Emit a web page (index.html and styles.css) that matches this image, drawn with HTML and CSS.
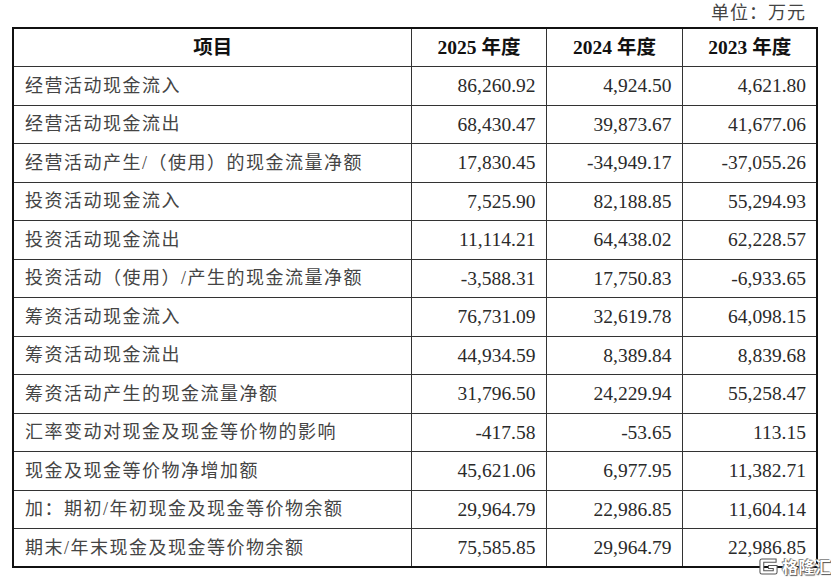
FILE: index.html
```html
<!DOCTYPE html>
<html lang="zh-CN">
<head>
<meta charset="utf-8">
<title>现金流量</title>
<link rel="stylesheet" href="styles.css">
</head>
<body>
<div class="page">
  <div class="unit">单位：万元</div>
  <table class="cf">
    <colgroup>
      <col class="c1"><col class="c2"><col class="c3"><col class="c4">
    </colgroup>
    <thead>
      <tr><th>项目</th><th>2025 年度</th><th>2024 年度</th><th>2023 年度</th></tr>
    </thead>
    <tbody>
      <tr><td class="lbl">经营活动现金流入</td><td>86,260.92</td><td>4,924.50</td><td>4,621.80</td></tr>
      <tr><td class="lbl">经营活动现金流出</td><td>68,430.47</td><td>39,873.67</td><td>41,677.06</td></tr>
      <tr><td class="lbl">经营活动产生/（使用）的现金流量净额</td><td>17,830.45</td><td>-34,949.17</td><td>-37,055.26</td></tr>
      <tr><td class="lbl">投资活动现金流入</td><td>7,525.90</td><td>82,188.85</td><td>55,294.93</td></tr>
      <tr><td class="lbl">投资活动现金流出</td><td>11,114.21</td><td>64,438.02</td><td>62,228.57</td></tr>
      <tr><td class="lbl">投资活动（使用）/产生的现金流量净额</td><td>-3,588.31</td><td>17,750.83</td><td>-6,933.65</td></tr>
      <tr><td class="lbl">筹资活动现金流入</td><td>76,731.09</td><td>32,619.78</td><td>64,098.15</td></tr>
      <tr><td class="lbl">筹资活动现金流出</td><td>44,934.59</td><td>8,389.84</td><td>8,839.68</td></tr>
      <tr><td class="lbl">筹资活动产生的现金流量净额</td><td>31,796.50</td><td>24,229.94</td><td>55,258.47</td></tr>
      <tr><td class="lbl">汇率变动对现金及现金等价物的影响</td><td>-417.58</td><td>-53.65</td><td>113.15</td></tr>
      <tr><td class="lbl">现金及现金等价物净增加额</td><td>45,621.06</td><td>6,977.95</td><td>11,382.71</td></tr>
      <tr><td class="lbl">加：期初/年初现金及现金等价物余额</td><td>29,964.79</td><td>22,986.85</td><td>11,604.14</td></tr>
      <tr><td class="lbl">期末/年末现金及现金等价物余额</td><td>75,585.85</td><td>29,964.79</td><td>22,986.85</td></tr>
    </tbody>
  </table>
  <div class="wm">
    <svg class="wm-logo" viewBox="0 0 22 20" width="21" height="19">
      <path d="M19 2 H4 Q2 2 2 4 V16 Q2 18 4 18 H18 Q20 18 20 16 V9 H11 V12 H16 V14.5 H6 V5.5 H19 Z" fill="#fff" stroke="#555" stroke-width="1.1"/>
    </svg>
    <span class="wm-text">格隆汇</span>
  </div>
</div>
</body>
</html>
```

FILE: styles.css
```css
html, body {
  margin: 0;
  padding: 0;
  background: #fff;
}

.page {
  position: relative;
  width: 831px;
  height: 581px;
  padding-left: 12px;
  box-sizing: border-box;
  font-family: "Liberation Serif", "Noto Sans CJK SC", serif;
  color: #2a2a2a;
}

.unit {
  width: 806px;
  height: 27px;
  box-sizing: border-box;
  padding-right: 12px;
  text-align: right;
  font-size: 18px;
  letter-spacing: 1px;
  line-height: 27px;
  color: #444;
}

.cf {
  width: 806px;
  border-collapse: collapse;
  table-layout: fixed;
  border: 2.5px solid #111;
}

.c1 { width: 398px; }
.c2 { width: 135px; }
.c3 { width: 136px; }
.c4 { width: 135px; }

.cf th,
.cf td {
  border: 1px solid #333;
  height: 38.5px;
  padding: 0 10px 0 11px;
  box-sizing: border-box;
  font-size: 19.5px;
  line-height: 1;
  white-space: nowrap;
}

.cf th {
  text-align: center;
  font-weight: bold;
  color: #111;
}

.cf td {
  text-align: right;
}

.cf td.lbl {
  text-align: left;
  font-size: 18px;
  letter-spacing: 1.5px;
  color: #444;
}

.wm {
  position: absolute;
  left: 758px;
  top: 556px;
  display: flex;
  align-items: center;
  gap: 3px;
  white-space: nowrap;
}

.wm-logo {
  display: block;
  flex: none;
}

.wm-text {
  font-family: "Noto Sans CJK SC", sans-serif;
  font-size: 16px;
  line-height: 20px;
  font-weight: bold;
  color: #fff;
  letter-spacing: 0.5px;
  text-shadow: 0 0 1px #444, 1px 1px 1px #555, -1px -1px 0 #999;
}
```
